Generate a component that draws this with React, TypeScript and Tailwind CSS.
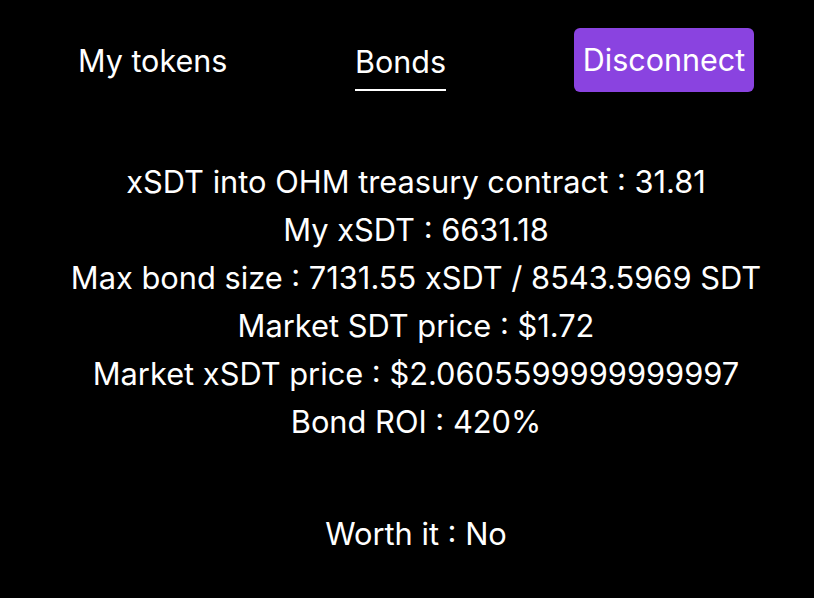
const lines = [
	"xSDT into OHM treasury contract : 31.81",
	"My xSDT : 6631.18",
	"Max bond size : 7131.55 xSDT / 8543.5969 SDT",
	"Market SDT price : $1.72",
	"Market xSDT price : $2.0605599999999997",
	"Bond ROI : 420%",
];

const App = () => {
	return (
		<div className="min-h-[598px] bg-black text-white font-['Inter',sans-serif]">
			<nav className="flex items-start pl-[78px] pt-[28px] h-[92px]">
				<a className="text-[30.5px] leading-[66px] w-[148px] whitespace-nowrap">My tokens</a>
				<a className="ml-[129px] text-[30.5px] leading-[60px] w-[91px] whitespace-nowrap border-b-2 border-white h-[63px] flex justify-center pt-[4px]">
					Bonds
				</a>
				<button className="ml-[128px] w-[180px] h-[64px] rounded-md bg-[#8a43e0] text-[30.5px] whitespace-nowrap">
					Disconnect
				</button>
			</nav>
			<div className="mt-[66px] pl-[18px] flex flex-col items-center">
				{lines.map((l) => (
					<p key={l} className="text-[30.8px] leading-[48px] whitespace-nowrap">
						{l}
					</p>
				))}
				<p className="mt-[64px] text-[30.8px] leading-[48px]">Worth it : No</p>
			</div>
		</div>
	);
};

export default App;
